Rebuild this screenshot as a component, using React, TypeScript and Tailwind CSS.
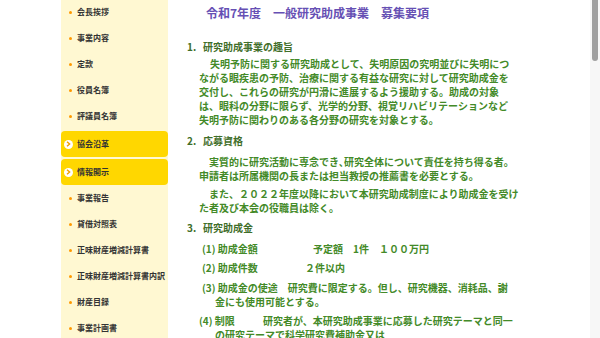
import React from "react";

const jp = { fontFamily: '"Noto Sans CJK JP", "Noto Sans", sans-serif' };

type NavItem = { label: string; active?: boolean };

const navItems: NavItem[] = [
  { label: "会長挨拶" },
  { label: "事業内容" },
  { label: "定款" },
  { label: "役員名簿" },
  { label: "評議員名簿" },
  { label: "協会沿革", active: true },
  { label: "情報開示", active: true },
  { label: "事業報告" },
  { label: "貸借対照表" },
  { label: "正味財産増減計算書" },
  { label: "正味財産増減計算書内訳" },
  { label: "財産目録" },
  { label: "事業計画書" },
];

function Sidebar() {
  return (
    <aside className="w-[107px] shrink-0 bg-[#fff8d2] overflow-hidden">
      <ul className="-mt-[1px]">
        {navItems.map((item) =>
          item.active ? (
            <li
              key={item.label}
              className="mt-[2px] first:mt-0 h-[26px] flex items-center rounded-[4px] bg-[#ffd700] pl-[3px]"
            >
              <span className="w-[9px] h-[9px] rounded-full bg-white flex items-center justify-center">
                <svg width="5" height="6" viewBox="0 0 5 6">
                  <path d="M1 0.8 L3.6 3 L1 5.2" fill="none" stroke="#f0a000" strokeWidth="1.4" />
                </svg>
              </span>
              <span className="ml-[4px] text-[8px] font-bold text-[#333] whitespace-nowrap">{item.label}</span>
            </li>
          ) : (
            <li key={item.label} className="h-[26px] flex items-center pl-[8px]">
              <span className="w-[3px] h-[3px] rounded-full bg-[#ff9900]" />
              <span className="ml-[5px] text-[8px] font-bold text-[#333] whitespace-nowrap">{item.label}</span>
            </li>
          )
        )}
      </ul>
    </aside>
  );
}

function Heading({ num, children, className }: { num: string; children: React.ReactNode; className: string }) {
  return (
    <h3 className={`flex h-[14px] items-center text-[10px] font-bold text-[#3f6e2a] ${className}`}>
      <span className="w-[16px]">{num}</span>
      <span>{children}</span>
    </h3>
  );
}

export default function App() {
  return (
    <div className="w-[600px] h-[338px] overflow-hidden bg-white flex" style={jp}>
      <div className="w-[61px] shrink-0" />
      <Sidebar />
      <main className="flex-1 pl-[19px] pt-[6px] leading-[14px] text-[#438a28] text-[10px] font-semibold whitespace-nowrap">
        <h2 className="ml-[19px] h-[14px] text-[12px] font-bold text-[#6650b4]">
          令和7年度　一般研究助成事業　募集要項
        </h2>

        <Heading num="1." className="mt-[20px]">研究助成事業の趣旨</Heading>
        <p className="mt-[3px] pl-[12px] indent-[11px]">
          失明予防に関する研究助成として、失明原因の究明並びに失明につ
          <br />
          ながる眼疾患の予防、治療に関する有益な研究に対して研究助成金を
          <br />
          交付し、これらの研究が円滑に進展するよう援助する。助成の対象
          <br />
          は、眼科の分野に限らず、光学的分野、視覚リハビリテーションなど
          <br />
          失明予防に関わりのある各分野の研究を対象とする。
        </p>

        <Heading num="2." className="mt-[7px]">応募資格</Heading>
        <p className="mt-[7px] pl-[12px] indent-[10px]">
          実質的に研究活動に専念でき､研究全体について責任を持ち得る者。
          <br />
          申請者は所属機関の長または担当教授の推薦書を必要とする。
        </p>
        <p className="mt-[4px] pl-[12px] indent-[10px]">
          また、２０２２年度以降において本研究助成制度により助成金を受け
          <br />
          た者及び本会の役職員は除く。
        </p>

        <Heading num="3." className="mt-[6px]">研究助成金</Heading>
        <div className="pl-[15px]">
          <p className="mt-[7px] flex">
            <span className="w-[111px]">(1) 助成金額</span>
            <span>予定額　1件　１００万円</span>
          </p>
          <p className="mt-[5px] flex">
            <span className="w-[103px]">(2) 助成件数</span>
            <span>２件以内</span>
          </p>
          <p className="mt-[6px]">
            (3) 助成金の使途　研究費に限定する。但し、研究機器、消耗品、謝
            <br />
            <span className="pl-[13px]">金にも使用可能とする。</span>
          </p>
          <p className="mt-[5px] -ml-[3px]">
            <span className="inline-block w-[64px]">(4) 制限</span>
            研究者が、本研究助成事業に応募した研究テーマと同一
            <br />
            <span className="pl-[16px]">の研究テーマで科学研究費補助金又は</span>
          </p>
        </div>
      </main>
      <div className="w-[10px] shrink-0 bg-[#f7f7f7] flex justify-center">
        <div className="w-[6px] h-[61px] rounded-b-[3px] bg-[#a0a0a0]" />
      </div>
    </div>
  );
}
